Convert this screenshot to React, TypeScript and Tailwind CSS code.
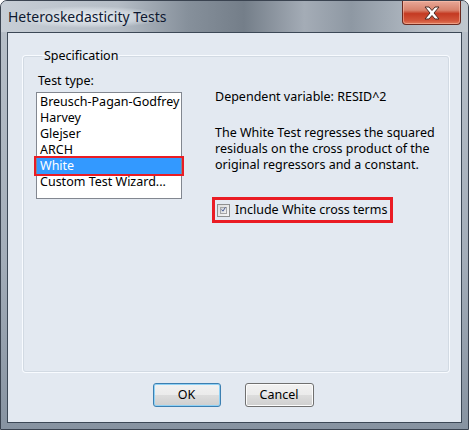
import React from "react";

const items = [
  "Breusch-Pagan-Godfrey",
  "Harvey",
  "Glejser",
  "ARCH",
  "White",
  "Custom Test Wizard...",
];

const CloseButton = () => (
  <div className="w-[59px] h-[24px] ml-auto mr-[7px] rounded-b-[4px] border border-t-0 border-[#6b2a20] bg-[linear-gradient(#e8a898_0%,#d8826c_40%,#c43a22_55%,#d2553a_85%,#e07a5a_100%)] shadow-[inset_0_0_0_1px_rgba(255,200,180,0.5)] flex items-center justify-center">
    <svg width="18" height="14" viewBox="0 0 18 14">
      <path
        d="M2 1 L6 1 L9 4.5 L12 1 L16 1 L11 7 L16 13 L12 13 L9 9.5 L6 13 L2 13 L7 7 Z"
        fill="#ffffff"
        stroke="#4a2a24"
        strokeWidth="1"
        strokeLinejoin="round"
      />
    </svg>
  </div>
);

const CheckBox = () => (
  <div className="w-[13px] h-[13px] border border-[#8e8f8f] bg-[linear-gradient(135deg,#dcdcdc,#f6f6f6)] p-[2px] shrink-0">
    <div className="w-full h-full border border-[#a5a5a5] bg-[linear-gradient(135deg,#cbcfd5,#f4f4f4)] flex items-center justify-center">
      <svg width="9" height="9" viewBox="0 0 9 9" className="-mt-[1px]">
        <path d="M1 4.5 L3.5 7.5 L8 0.5" fill="none" stroke="#4a5c94" strokeWidth="1.8" />
      </svg>
    </div>
  </div>
);

const App = () => {
  return (
    <div className="w-[469px] h-[430px] rounded-t-[7px] border border-[#3a4350] bg-[linear-gradient(#b9c1ca,#a3adb9_60%,#8793a1)] flex flex-col font-['Noto_Sans',sans-serif] text-[12.5px] leading-[16px] text-black overflow-hidden">
      {/* title bar */}
      <div className="h-[31px] flex items-start bg-[linear-gradient(90deg,#c7ced6_0%,#b5bdc6_25%,#86909b_40%,#747e89_52%,#a4acb6_65%,#8e98a3_75%,#b3bbc4_90%,#c1c8cf_100%)]">
        <div className="mt-[5px] ml-[6px] px-[1px] rounded-[10px] bg-[radial-gradient(closest-side,rgba(235,240,245,0.95),rgba(220,226,232,0.6)_70%,rgba(220,226,232,0))] text-[14px] leading-[22px] text-[#0e1830]">
          Heteroskedasticity Tests
        </div>
        <CloseButton />
      </div>

      {/* client area */}
      <div className="mx-[6px] h-[391px] border border-[#3c4856] bg-[#e3e9f1] flex flex-col">
        <fieldset className="mt-[15px] ml-[15px] mr-[12px] h-[324px] border border-[#d2dae3] rounded-[3px] shadow-[0_0_0_1px_#f8fbff] px-[12px]">
          <legend className="ml-[6px] px-[2px]">Specification</legend>
          <div className="flex mt-[9px]">
            <div className="w-[146px]">
              <div className="pl-[2px]">Test type:</div>
              <div className="mt-[3px] h-[107px] border border-[#828790] bg-white pt-[1px]">
                {items.map((item, index) =>
                  item === "White" ? (
                    <div key={index} className="relative h-[16px] pl-[3px] bg-[#3399ff] text-white">
                      {item}
                      <div className="absolute -left-[3px] -right-[3px] -top-[2px] -bottom-[2px] border-2 border-[#ea1c24]" />
                    </div>
                  ) : (
                    <div key={index} className="h-[16px] pl-[3px]">
                      {item}
                    </div>
                  )
                )}
              </div>
            </div>

            <div className="ml-[33px] mt-[16px] flex flex-col items-start">
              <div>Dependent variable: RESID^2</div>
              <div className="mt-[20px]">
                The White Test regresses the squared
                <br />
                residuals on the cross product of the
                <br />
                original regressors and a constant.
              </div>
              <div className="mt-[24px] -ml-[3px] h-[26px] border-[3px] border-[#ea1c24] flex items-center pl-[2px] pr-[3px] gap-[5px]">
                <CheckBox />
                <span>Include White cross terms</span>
              </div>
            </div>
          </div>
        </fieldset>

        <div className="mt-[11px] flex justify-center gap-[24px] pr-[3px]">
          <button className="w-[68px] h-[24px] rounded-[3px] border border-[#3c7fb1] shadow-[inset_0_0_0_1px_#8fd1f5] bg-[linear-gradient(#f2f2f2_0%,#ebebeb_50%,#dddddd_50%,#cfcfcf_100%)]">
            OK
          </button>
          <button className="w-[69px] h-[24px] rounded-[3px] border border-[#707070] shadow-[inset_0_0_0_1px_#fcfcfc] bg-[linear-gradient(#f2f2f2_0%,#ebebeb_50%,#dddddd_50%,#cfcfcf_100%)]">
            Cancel
          </button>
        </div>
      </div>
    </div>
  );
};

export default App;
